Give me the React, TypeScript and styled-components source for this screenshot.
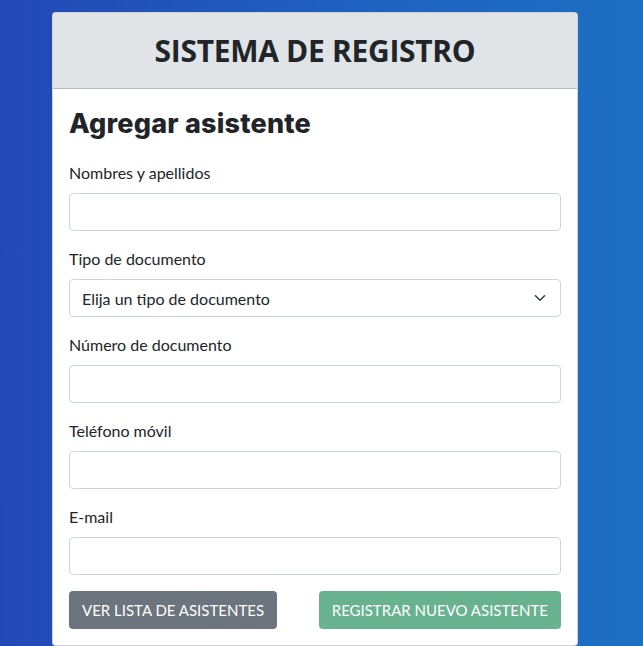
import React from 'react';
import styled, { createGlobalStyle } from 'styled-components';

const GlobalStyle = createGlobalStyle`
  html, body {
    margin: 0;
    padding: 0;
    height: 100%;
  }
  body {
    background: linear-gradient(90deg, #2348b6 0%, #1f5fbf 50%, #1c70c3 100%);
    font-family: Lato, "Noto Sans", sans-serif;
    color: #212529;
    overflow: hidden;
  }
  * {
    box-sizing: border-box;
  }
`;

const Page = styled.div`
  padding: 12px 0 0 52px;
`;

const Card = styled.div`
  width: 526px;
  background: #fff;
  border: 1px solid rgba(0, 0, 0, 0.175);
  border-radius: 4px;
  overflow: hidden;
`;

const CardHeader = styled.div`
  height: 76px;
  display: flex;
  align-items: center;
  justify-content: center;
  background: #e0e4e6;
  border-bottom: 1px solid rgba(0, 0, 0, 0.175);
`;

const Title = styled.h1`
  margin: 0;
  font-family: "Open Sans", sans-serif;
  font-weight: 700;
  font-size: 30px;
  letter-spacing: -0.3px;
  color: #212529;
`;

const CardBody = styled.form`
  padding: 16px;
`;

const Heading = styled.h2`
  margin: 0 0 18px;
  font-family: Inter, sans-serif;
  font-weight: 800;
  font-size: 27px;
  letter-spacing: 0.2px;
  line-height: 38px;
`;

const Field = styled.div`
  margin-bottom: 16px;
`;

const Label = styled.label`
  display: block;
  font-size: 16px;
  line-height: 24px;
  margin-bottom: 8px;
`;

const Input = styled.input`
  display: block;
  width: 100%;
  height: 38px;
  padding: 6px 12px;
  border: 1px solid #ced4da;
  border-radius: 4px;
  font: inherit;
  background: #fff;
`;

const SelectWrap = styled.div`
  position: relative;
`;

const Select = styled.select`
  display: block;
  width: 100%;
  height: 38px;
  padding: 6px 36px 6px 12px;
  border: 1px solid #ced4da;
  border-radius: 4px;
  font: inherit;
  color: #212529;
  background: #fff;
  appearance: none;
`;

const Chevron = styled.svg`
  position: absolute;
  right: 14px;
  top: 13px;
  pointer-events: none;
`;

const Actions = styled.div`
  display: flex;
  justify-content: space-between;
`;

const Button = styled.button<{ variant: 'secondary' | 'success' }>`
  height: 38px;
  padding: 0 13px;
  border: none;
  border-radius: 4px;
  font: inherit;
  font-size: 15px;
  text-transform: uppercase;
  color: #fff;
  background: ${(props) => (props.variant === 'secondary' ? '#6c757d' : '#69b290')};
`;

const fields = [
  { label: 'Nombres y apellidos', type: 'text' },
  { label: 'Tipo de documento', type: 'select' },
  { label: 'Número de documento', type: 'text' },
  { label: 'Teléfono móvil', type: 'text' },
  { label: 'E-mail', type: 'email' },
];

const App: React.FC = () => (
  <>
    <GlobalStyle />
    <Page>
      <Card>
        <CardHeader>
          <Title>SISTEMA DE REGISTRO</Title>
        </CardHeader>
        <CardBody onSubmit={(e) => e.preventDefault()}>
          <Heading>Agregar asistente</Heading>
          {fields.map((f) => (
            <Field key={f.label}>
              <Label>{f.label}</Label>
              {f.type === 'select' ? (
                <SelectWrap>
                  <Select defaultValue="">
                    <option value="">Elija un tipo de documento</option>
                    <option value="dni">DNI</option>
                    <option value="ce">Carné de extranjería</option>
                  </Select>
                  <Chevron width="14" height="12" viewBox="0 0 16 16">
                    <path d="M2 5l6 6 6-6" fill="none" stroke="#343a40" strokeWidth="2" strokeLinecap="round" strokeLinejoin="round" />
                  </Chevron>
                </SelectWrap>
              ) : (
                <Input type={f.type} />
              )}
            </Field>
          ))}
          <Actions>
            <Button type="button" variant="secondary">Ver lista de asistentes</Button>
            <Button type="submit" variant="success" disabled>Registrar nuevo asistente</Button>
          </Actions>
        </CardBody>
      </Card>
    </Page>
  </>
);

export default App;
